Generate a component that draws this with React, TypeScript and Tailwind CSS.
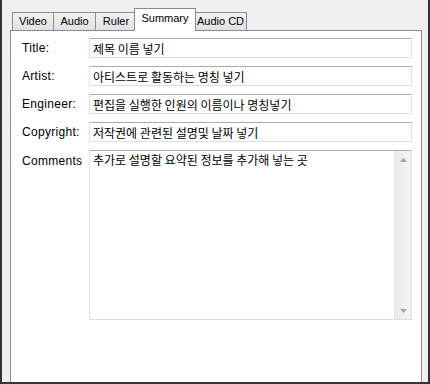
import React from 'react';

const sans = 'font-["Liberation_Sans","Noto_Sans_CJK_KR",sans-serif]';
const kr = 'font-["Noto_Sans_CJK_KR","Liberation_Sans",sans-serif]';

const tabs = [
  { label: 'Video', w: 'w-[42px]' },
  { label: 'Audio', w: 'w-[43px]' },
  { label: 'Ruler', w: 'w-[42px]' },
  { label: 'Summary', w: 'w-[62px]', active: true },
  { label: 'Audio CD', w: 'w-[53px]' },
];

const fields = [
  { label: 'Title:', value: '제목 이름 넣기' },
  { label: 'Artist:', value: '아티스트로 활동하는 명칭 넣기' },
  { label: 'Engineer:', value: '편집을 실행한 인원의 이름이나 명칭넣기' },
  { label: 'Copyright:', value: '저작권에 관련된 설명및 날짜 넣기' },
];

const Arrow: React.FC<{ up?: boolean }> = ({ up }) => (
  <div className="h-[17px] flex items-center justify-center">
    <svg width="7" height="4" viewBox="0 0 7 4">
      <path d={up ? 'M0 4 L3.5 0 L7 4 Z' : 'M0 0 L3.5 4 L7 0 Z'} fill="#a3a3a3" />
    </svg>
  </div>
);

export default function App() {
  return (
    <div className={`w-[430px] h-[384px] bg-[#f0f0f0] border-l-2 border-r-2 border-b-2 border-[#3a3232] flex flex-col pl-2 pr-1.5 ${sans}`}>
      {/* Tab strip */}
      <div className="relative z-10 flex items-end h-[31px] pt-2 pl-0.5 -mb-px">
        {tabs.map((t) =>
          t.active ? (
            <div
              key={t.label}
              className={`${t.w} -mx-0.5 h-[23px] bg-white border border-b-0 border-[#898c95] flex justify-center pt-[1px] text-[11px] text-black relative z-10`}
            >
              {t.label}
            </div>
          ) : (
            <div
              key={t.label}
              className={`${t.w} -mr-px mb-px h-[18px] bg-gradient-to-b from-[#f2f2f2] to-[#e1e1e1] border border-b-0 border-[#898c95] flex items-center justify-center text-[11px] text-black`}
            >
              {t.label}
            </div>
          )
        )}
      </div>

      {/* Panel */}
      <div className="flex-1 bg-white border border-b-0 border-[#898c95] pl-[11px] pr-[9px] pt-[7px] flex flex-col gap-2">
        {fields.map((f) => (
          <div key={f.label} className="flex items-center h-5">
            <div className="w-[61px] mr-[6px] text-[12px] tracking-[0.3px] text-black whitespace-nowrap overflow-hidden -mt-px">{f.label}</div>
            <input
              readOnly
              defaultValue={f.value}
              className={`flex-1 h-5 min-w-0 border border-[#dbdfe6] border-t-[#abadb3] border-l-[#e2e3ea] px-[3px] text-[12px] text-black outline-none bg-white ${kr}`}
            />
          </div>
        ))}

        <div className="flex items-start">
          <div className="w-[61px] mr-[6px] pt-[2px] text-[12px] tracking-[0.3px] text-black whitespace-nowrap overflow-hidden">Comments</div>
          <div className="flex-1 h-[170px] flex border border-[#dbdfe6] border-t-[#abadb3] border-l-[#e2e3ea]">
            <div className={`flex-1 px-[3px] text-[12px] text-black ${kr}`}>추가로 설명할 요약된 정보를 추가해 넣는 곳</div>
            <div className="w-[17px] bg-gradient-to-r from-[#ebebeb] to-[#f4f4f4] border-l border-[#e6e6e6] flex flex-col justify-between">
              <Arrow up />
              <Arrow />
            </div>
          </div>
        </div>
      </div>
    </div>
  );
}
